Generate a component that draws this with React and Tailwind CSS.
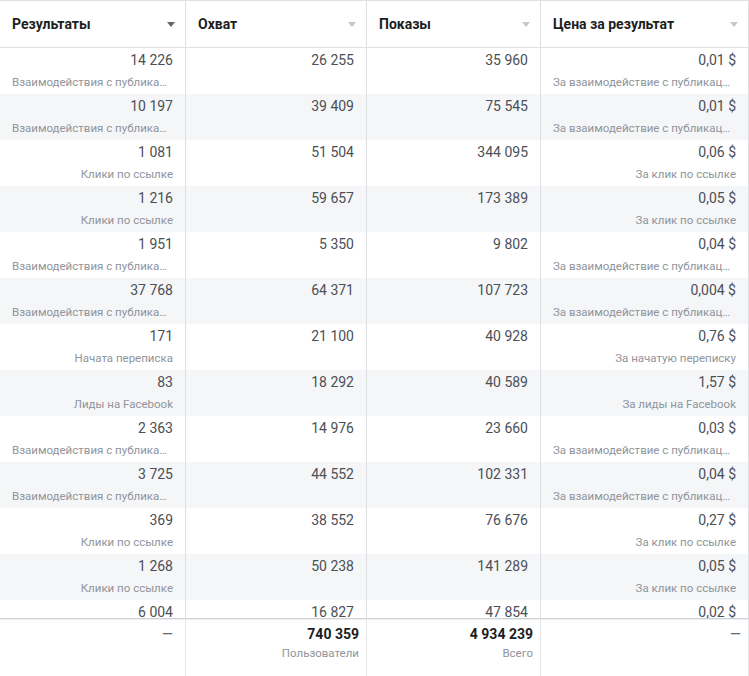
const cols = [
  { title: 'Результаты', w: 'w-[186px]', active: true },
  { title: 'Охват', w: 'w-[181px]' },
  { title: 'Показы', w: 'w-[174px]' },
  { title: 'Цена за результат', w: 'w-[208px]' },
]

const ENG = 'Взаимодействия с публикацией'
const ENG_COST = 'За взаимодействие с публикацией'
const CLK = 'Клики по ссылке'
const CLK_COST = 'За клик по ссылке'

const rows = [
  ['14 226', ENG, '26 255', '35 960', '0,01 $', ENG_COST],
  ['10 197', ENG, '39 409', '75 545', '0,01 $', ENG_COST],
  ['1 081', CLK, '51 504', '344 095', '0,06 $', CLK_COST],
  ['1 216', CLK, '59 657', '173 389', '0,05 $', CLK_COST],
  ['1 951', ENG, '5 350', '9 802', '0,04 $', ENG_COST],
  ['37 768', ENG, '64 371', '107 723', '0,004 $', ENG_COST],
  ['171', 'Начата переписка', '21 100', '40 928', '0,76 $', 'За начатую переписку'],
  ['83', 'Лиды на Facebook', '18 292', '40 589', '1,57 $', 'За лиды на Facebook'],
  ['2 363', ENG, '14 976', '23 660', '0,03 $', ENG_COST],
  ['3 725', ENG, '44 552', '102 331', '0,04 $', ENG_COST],
  ['369', CLK, '38 552', '76 676', '0,27 $', CLK_COST],
  ['1 268', CLK, '50 238', '141 289', '0,05 $', CLK_COST],
  ['6 004', '', '16 827', '47 854', '0,02 $', ''],
]

function SortArrow({ active }) {
  return (
    <svg width="8" height="5" viewBox="0 0 8 5" className="shrink-0">
      <path d="M0 0h8L4 5z" fill={active ? '#606770' : '#c4c8cd'} />
    </svg>
  )
}

function Cell({ w, value, sub }) {
  return (
    <div className={`${w} shrink-0 px-3 pt-[3px] text-right border-r border-[#dddfe2]`}>
      <div className="text-[14px] leading-[18px] text-[#4b4f56] whitespace-nowrap">{value}</div>
      {sub && <div className="mt-[4px] text-[11.5px] leading-[18px] text-[#90949c] truncate">{sub}</div>}
    </div>
  )
}

function FooterCell({ w, value, sub, pr }) {
  return (
    <div className={`${w} shrink-0 pl-3 ${pr} pt-[6px] text-right border-r border-[#e4e6e9]`}>
      {value === '—' ? (
        <div className="text-[14px] leading-[18px] text-[#606770]">—</div>
      ) : (
        <div className="text-[14px] leading-[18px] font-bold text-[#1c1e21]">{value}</div>
      )}
      {sub && <div className="mt-[1px] text-[11.5px] leading-[18px] text-[#90949c]">{sub}</div>}
    </div>
  )
}

export default function App() {
  return (
    <div className="w-[749px] h-[676px] overflow-hidden bg-white" style={{ fontFamily: 'Roboto, "Liberation Sans", sans-serif' }}>
      {/* header */}
      <div className="flex h-[48px] border-t border-b border-[#dddfe2]">
        {cols.map(c => (
          <div key={c.title} className={`${c.w} shrink-0 flex items-center justify-between pl-3 pr-[10px] border-r border-[#dddfe2]`}>
            <span className="text-[14px] font-bold text-[#1c1e21]">{c.title}</span>
            <SortArrow active={c.active} />
          </div>
        ))}
      </div>

      {/* body */}
      <div className="h-[570px] overflow-hidden">
        {rows.map((r, i) => (
          <div key={i} className={`flex h-[46px] ${i % 2 ? 'bg-[#f5f6f7]' : 'bg-white'}`}>
            <Cell w="w-[186px]" value={r[0]} sub={r[1]} />
            <Cell w="w-[181px]" value={r[2]} />
            <Cell w="w-[174px]" value={r[3]} />
            <Cell w="w-[208px]" value={r[4]} sub={r[5]} />
          </div>
        ))}
      </div>

      {/* totals */}
      <div className="flex h-[58px] border-t border-[#cfd2d6] shadow-[inset_0_1px_0_#eceef0] bg-white">
        <FooterCell w="w-[186px]" value="—" pr="pr-3" />
        <FooterCell w="w-[181px]" value="740 359" sub="Пользователи" pr="pr-[7px]" />
        <FooterCell w="w-[174px]" value="4 934 239" sub="Всего" pr="pr-[7px]" />
        <FooterCell w="w-[208px]" value="—" pr="pr-[7px]" />
      </div>
    </div>
  )
}
